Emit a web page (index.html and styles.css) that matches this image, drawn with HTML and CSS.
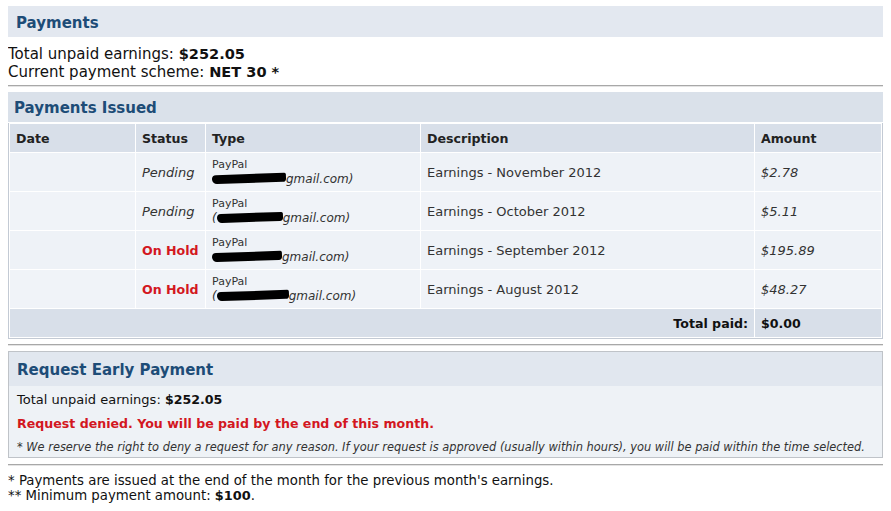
FILE: index.html
```html
<!DOCTYPE html>
<html lang="en">
  <head>
    <meta charset="UTF-8" />
    <title>Payments</title>
    <link rel="stylesheet" href="styles.css">
  </head>
  <body>
    <h2 class="section-title">Payments</h2>
    <div class="summary">
      <div>Total unpaid earnings: <b>$252.05</b></div>
      <div>Current payment scheme: <b>NET 30 *</b></div>
    </div>

    <hr class="divider after-summary" />

    <h2 class="section-title issued">Payments Issued</h2>
    <table class="payments">
      <thead>
        <tr>
          <th class="col-date">Date</th>
          <th class="col-status">Status</th>
          <th class="col-type">Type</th>
          <th class="col-desc">Description</th>
          <th class="col-amount">Amount</th>
        </tr>
      </thead>
      <tbody>
        <tr>
          <td></td>
          <td class="pending">Pending</td>
          <td class="type">PayPal<br /><i><span class="redact r1"></span>gmail.com)</i></td>
          <td>Earnings - November 2012</td>
          <td class="amount">$2.78</td>
        </tr>
        <tr>
          <td></td>
          <td class="pending">Pending</td>
          <td class="type">PayPal<br /><i>(<span class="redact r2"></span>gmail.com)</i></td>
          <td>Earnings - October 2012</td>
          <td class="amount">$5.11</td>
        </tr>
        <tr>
          <td></td>
          <td class="on-hold">On Hold</td>
          <td class="type">PayPal<br /><i><span class="redact r3"></span>gmail.com)</i></td>
          <td>Earnings - September 2012</td>
          <td class="amount">$195.89</td>
        </tr>
        <tr>
          <td></td>
          <td class="on-hold">On Hold</td>
          <td class="type">PayPal<br /><i>(<span class="redact r4"></span>gmail.com)</i></td>
          <td>Earnings - August 2012</td>
          <td class="amount">$48.27</td>
        </tr>
      </tbody>
      <tfoot>
        <tr>
          <td colspan="4" class="total-label">Total paid:</td>
          <td class="total-value">$0.00</td>
        </tr>
      </tfoot>
    </table>

    <hr class="divider after-table" />

    <div class="request-box">
      <h2 class="box-title">Request Early Payment</h2>
      <div class="box-body">
        <div class="box-line">Total unpaid earnings: <b>$252.05</b></div>
        <div class="box-line denied">Request denied. You will be paid by the end of this month.</div>
        <div class="box-note">* We reserve the right to deny a request for any reason. If your request is approved (usually within hours), you will be paid within the time selected.</div>
      </div>
    </div>

    <hr class="divider after-box" />

    <div class="footnotes">
      <div>* Payments are issued at the end of the month for the previous month's earnings.</div>
      <div>** Minimum payment amount: <b>$100</b>.</div>
    </div>
  </body>
</html>
```

FILE: styles.css
```css
/* Global */
body {
  font-family: "DejaVu Sans", Verdana, sans-serif;
  font-size: 13px;
  color: #222;
  background: #fff;
  margin: 6px 8px 0;
}

b {
  font-size: 0.97em;
}

/* Section headers */
.section-title {
  margin: 0;
  height: 31px;
  line-height: 34px;
  padding: 0 8px;
  font-size: 15px;
  font-weight: bold;
  color: #1d4c77;
  background: #e3e8f0;
}

.section-title.issued {
  height: 30px;
  line-height: 32px;
  padding-left: 6px;
  background: #dae1ea;
}

.summary {
  font-size: 15px;
  line-height: 18px;
  padding-top: 8px;
  color: #111;
}

.divider {
  margin: 6px 0 5px;
  border: 0;
  border-top: 1px solid #a8a8a8;
  border-bottom: 1px solid #e4e4e4;
  height: 0;
}

.divider.after-summary {
  margin-top: 4px;
}

.divider.after-table {
  margin-top: 5px;
}

/* Payments table */
.payments {
  width: 100%;
  border-collapse: separate;
  border-spacing: 1px;
  border: 1px solid #c3cad4;
  border-top: 0;
  background: #fff;
  margin-top: 1px;
}

.payments th {
  text-align: left;
  background: #d8dfe9;
  height: 28px;
  padding: 0 6px;
  font-size: 12.6px;
  color: #222;
  white-space: nowrap;
}

.col-date {
  width: 113px;
}

.col-status {
  width: 57px;
}

.col-type {
  width: 202px;
}

.col-amount {
  width: 114px;
}

.payments tbody td {
  background: #eef2f7;
  height: 38px;
  padding: 0 6px;
  color: #333;
  white-space: nowrap;
}

.payments tbody tr:nth-child(even) td {
  background: #f0f3f8;
}

.pending {
  font-style: italic;
}

.payments tbody td.on-hold {
  font-weight: bold;
  font-size: 12.6px;
  color: #d3171f;
}

.type {
  font-size: 11px;
  line-height: 14px;
}

.type i {
  font-size: 12px;
}

.redact {
  display: inline-block;
  height: 9px;
  background: #000;
  border-radius: 5px 2px 4px 6px;
  vertical-align: 0;
  transform: rotate(-2deg);
}

.r1 { width: 74px; }
.r2 { width: 66px; }
.r3 { width: 70px; }
.r4 { width: 72px; }

.amount {
  font-style: italic;
}

.payments tfoot td {
  background: #d8dfe9;
  height: 28px;
  padding: 0 6px;
  font-weight: bold;
  font-size: 12.6px;
  color: #111;
}

.total-label {
  text-align: right;
}

/* Request early payment box */
.request-box {
  border: 1px solid #bfc3c8;
  background: #eef2f6;
}

.box-title {
  margin: 0;
  height: 34px;
  line-height: 36px;
  padding: 0 8px;
  font-size: 15px;
  font-weight: bold;
  color: #1d4c77;
  background: #e1e7ef;
}

.box-body {
  padding: 3px 8px 0;
}

.box-line {
  line-height: 22px;
  color: #111;
}

.box-line.denied {
  line-height: 26px;
  font-weight: bold;
  font-size: 12.6px;
  color: #d3171f;
}

.box-note {
  font-size: 11.4px;
  font-style: italic;
  line-height: 20px;
  color: #333;
}

.footnotes {
  padding-top: 2px;
  font-size: 13.3px;
  line-height: 15px;
  color: #111;
}
```
